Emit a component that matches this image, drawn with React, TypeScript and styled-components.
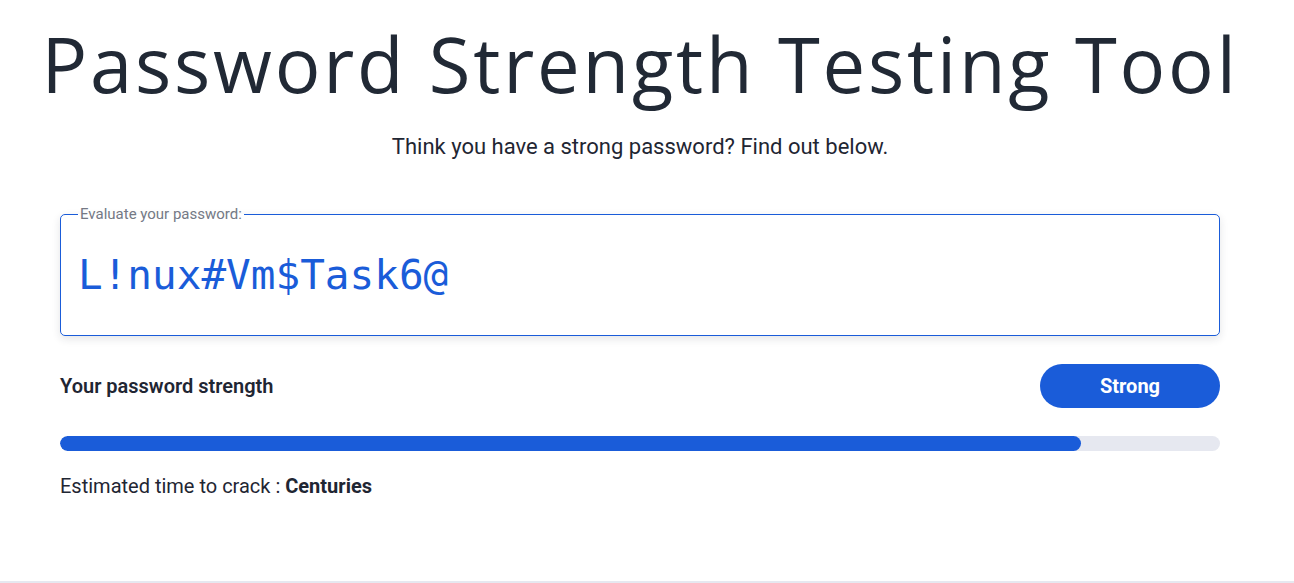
import React from "react";
import styled, { createGlobalStyle } from "styled-components";

const Global = createGlobalStyle`
  html, body { margin: 0; padding: 0; background: #ffffff; }
  body { font-family: Roboto, "Liberation Sans", sans-serif; color: #1f2633; }
  * { box-sizing: border-box; }
`;

const Page = styled.main`
  height: 583px;
  padding-right: 14px;
  border-bottom: 2px solid #e6e8f0;
  display: flex;
  justify-content: center;
`;

const Container = styled.div`
  width: 1160px;
  display: flex;
  flex-direction: column;
`;

const Title = styled.h1`
  margin: 14px -60px 0;
  text-align: center;
  font-family: "Open Sans", sans-serif;
  font-weight: 400;
  font-size: 76px;
  line-height: 100px;
  letter-spacing: 2.8px;
  color: #212935;
  white-space: nowrap;
`;

const Subtitle = styled.p`
  margin: 19px 0 0;
  text-align: center;
  font-size: 22px;
  line-height: 28px;
  color: #1f2633;
`;

const Field = styled.fieldset`
  margin: 44px 0 0;
  padding: 0 17px;
  height: 131px;
  border: 1px solid #1a5cd9;
  border-radius: 5px;
  box-shadow: 0 3px 8px rgba(30, 40, 60, 0.12);
`;

const Legend = styled.legend`
  padding: 0 2px;
  margin-left: 0;
  font-size: 15px;
  line-height: 18px;
  color: #747985;
`;

const InputArea = styled.div`
  height: 103px;
  display: flex;
  align-items: center;
`;

const PasswordInput = styled.input`
  width: 100%;
  border: none;
  outline: none;
  padding: 0;
  margin-bottom: 0;
  background: transparent;
  font-family: "DejaVu Sans Mono", monospace;
  font-size: 41px;
  color: #1a5cd9;
`;

const StrengthRow = styled.div`
  margin-top: 28px;
  display: flex;
  justify-content: space-between;
  align-items: center;
`;

const Label = styled.span`
  font-size: 20px;
  font-weight: 600;
  color: #1f2633;
`;

const Badge = styled.span`
  width: 180px;
  height: 44px;
  border-radius: 22px;
  background: #1a5cd9;
  color: #ffffff;
  font-size: 20px;
  font-weight: 700;
  display: flex;
  align-items: center;
  justify-content: center;
`;

const Track = styled.div`
  margin-top: 28px;
  height: 15px;
  border-radius: 8px;
  background: #e6e8f0;
  overflow: hidden;
`;

const Fill = styled.div`
  height: 100%;
  border-radius: 8px;
  background: #1a5cd9;
`;

const Estimate = styled.p`
  margin: 23px 0 0;
  font-size: 20px;
  line-height: 24px;
  color: #1f2633;
  b { font-weight: 700; }
`;

export default function App() {
  const value = "L!nux#Vm$Task6@";
  const percent = 88;
  return (
    <>
      <Global />
      <Page>
        <Container>
          <Title>Password Strength Testing Tool</Title>
          <Subtitle>Think you have a strong password? Find out below.</Subtitle>
          <Field>
            <Legend>Evaluate your password:</Legend>
            <InputArea>
              <PasswordInput defaultValue={value} spellCheck={false} />
            </InputArea>
          </Field>
          <StrengthRow>
            <Label>Your password strength</Label>
            <Badge>Strong</Badge>
          </StrengthRow>
          <Track>
            <Fill style={{ width: `${percent}%` }} />
          </Track>
          <Estimate>
            Estimated time to crack : <b>Centuries</b>
          </Estimate>
        </Container>
      </Page>
    </>
  );
}
